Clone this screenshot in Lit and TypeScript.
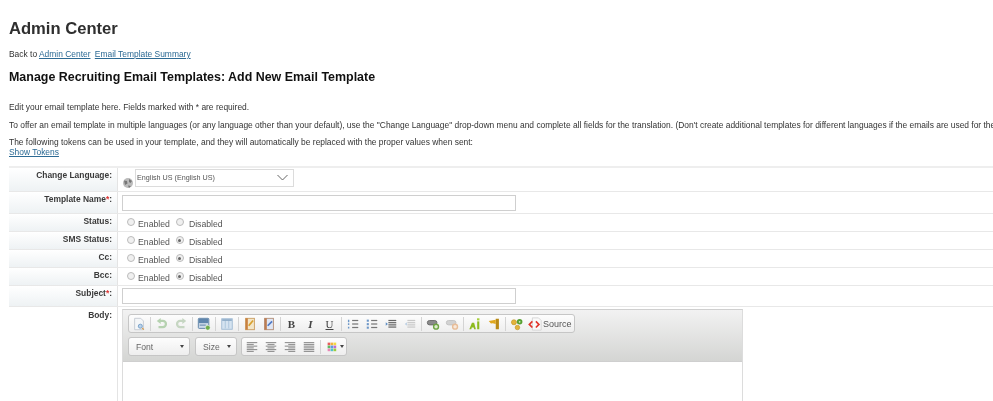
import { LitElement, html, css, svg } from "lit";
import { customElement } from "lit/decorators.js";

const L = (y: number, x1: number, x2: number, c: string, w = 1.4) =>
  svg`<line x1=${x1} y1=${y} x2=${x2} y2=${y} stroke=${c} stroke-width=${w} />`;
const lines = (c: string, xs = 3, xe = 13) => [4, 6.5, 9, 11.5].map((y) => L(y, xs, xe, c));

const icons: Record<string, unknown> = {
  preview: svg`<path d="M3 1.5h7l3 3v10H3z" fill="#f4f6f8" stroke="#c2c8d0"/><circle cx="9.5" cy="10.5" r="2.3" fill="#bcd3ea" stroke="#6f9bc6"/><path d="M11.5 12.5l2 2" stroke="#d89a4a" stroke-width="1.4"/>`,
  undo: svg`<path d="M5 4.5h4a3.5 3.5 0 0 1 0 7H4" fill="none" stroke="#b6d2b0" stroke-width="2.6"/><path d="M6.5 1v7L2 4.5z" fill="#b6d2b0"/>`,
  redo: svg`<g transform="matrix(-1 0 0 1 16 0)"><path d="M5 4.5h4a3.5 3.5 0 0 1 0 7H4" fill="none" stroke="#c6d6c2" stroke-width="2.6"/><path d="M6.5 1v7L2 4.5z" fill="#c6d6c2"/></g>`,
  image: svg`<rect x="1.5" y="1.5" width="12" height="11.5" rx="1" fill="#cfdcea" stroke="#557ba2"/><rect x="2" y="2" width="11" height="5" fill="#5f86ad"/><rect x="3" y="8.5" width="7" height="1.6" fill="#7f9dbb"/><circle cx="12.3" cy="12.3" r="2.8" fill="#6fae4c" stroke="#fff" stroke-width=".6"/>`,
  table: svg`<rect x="2" y="2" width="12" height="12" fill="#d5e3f0" stroke="#9db8d2"/><path d="M6 3v10M10 3v10" stroke="#a8c2da"/><path d="M2.5 3.5h11" stroke="#8fadc9" stroke-width="2"/>`,
  tpl1: svg`<rect x="3" y="1.5" width="10" height="13" fill="#f3e6c8" stroke="#c89a5c"/><rect x="3" y="1.5" width="2.5" height="13" fill="#c87f3f"/><path d="M6.5 10l5-6" stroke="#d9a02e" stroke-width="2"/>`,
  tpl2: svg`<rect x="3" y="1.5" width="10" height="13" fill="#dfe6f4" stroke="#b08a72"/><rect x="3" y="1.5" width="2.5" height="13" fill="#bd7c50"/><path d="M6.5 10l5-5" stroke="#4f78c4" stroke-width="2"/>`,
  numlist: svg`<g>${[4, 8, 12].map((y) => L(y, 7, 14, "#777"))}</g><path d="M3 3v3M3 7v2M3 11v2" stroke="#6d97c8" stroke-width="1.6"/>`,
  bullist: svg`<g>${[4, 8, 12].map((y) => L(y, 7, 14, "#777"))}</g><g fill="#6d97c8"><rect x="2" y="3" width="2.4" height="2.4"/><rect x="2" y="7" width="2.4" height="2.4"/><rect x="2" y="11" width="2.4" height="2.4"/></g>`,
  indent: svg`<g>${lines("#666", 5, 14)}</g><path d="M2 6l2.5 2L2 10z" fill="#5f8fc4"/>`,
  outdent: svg`<g>${lines("#c8c8c8", 5, 14)}</g><path d="M4.5 6L2 8l2.5 2z" fill="#bcd0e4"/>`,
  link: svg`<rect x="1.5" y="4" width="11" height="5" rx="2.5" fill="#8a8a8a" stroke="#666"/><circle cx="11.5" cy="11" r="2.8" fill="#dfeccf" stroke="#6ea544" stroke-width="1.6"/>`,
  unlink: svg`<rect x="1.5" y="4" width="11" height="5" rx="2.5" fill="#d2d2d2" stroke="#c0c0c0"/><circle cx="11.5" cy="11" r="2.8" fill="#f8e8da" stroke="#e8bd98" stroke-width="1.6"/>`,
  anchor: svg`<path d="M1.5 14l3-7.5H7L9 14H7L6.5 12h-2.2L3.8 14z" fill="#8dbb1f"/><rect x="10.5" y="5" width="2.4" height="9" fill="#8dbb1f"/><rect x="10.3" y="1.5" width="2.8" height="2.4" fill="#a7cf3a"/>`,
  flag: svg`<rect x="10" y="2" width="3.6" height="12" fill="#b98a16"/><path d="M2 4.5l8-1.5v5L6.5 7l-2 .5z" fill="#e0a81e"/>`,
  gear: svg`<g fill="#e3b33b" stroke="#b98a16" stroke-width=".6"><circle cx="4.5" cy="6" r="2.9"/><circle cx="8.5" cy="12" r="2.6"/></g><circle cx="11" cy="5.5" r="3.2" fill="#57a032"/><circle cx="11" cy="5.5" r="1" fill="#d9edc8"/>`,
  source: svg`<path d="M5 1h7l3 3v11H5z" fill="#fafafa" stroke="#d2d2d2"/><path d="M5 5L1.5 8.5 5 12M9 5l3.5 3.5L9 12" fill="none" stroke="#e2352b" stroke-width="1.9"/>`,
  left: svg`<g>${[3, 5, 7, 9, 11, 13].map((y, i) => L(y, 2, i % 2 ? 10 : 14, "#777", 1))}</g>`,
  center: svg`<g>${[3, 5, 7, 9, 11, 13].map((y, i) => L(y, i % 2 ? 4 : 2, i % 2 ? 12 : 14, "#777", 1))}</g>`,
  right: svg`<g>${[3, 5, 7, 9, 11, 13].map((y, i) => L(y, i % 2 ? 6 : 2, 14, "#777", 1))}</g>`,
  justify: svg`<g>${[3, 5, 7, 9, 11, 13].map((y) => L(y, 2, 14, "#777", 1))}</g>`,
  colors: svg`<g>${["#e85b5b", "#f2b33d", "#f4d93f", "#5dbb63", "#5a9be0", "#c06bd0", "#e887b5", "#4fc3c9", "#9ccc3c"].map((c, i) => svg`<rect x=${3 + (i % 3) * 3.4} y=${3 + Math.floor(i / 3) * 3.4} width="3" height="3" fill=${c} />`)}</g>`,
};

const row1: (string | null)[] = ["preview", null, "undo", "redo", null, "image", null, "table", null, "tpl1", "tpl2", null, "B", "I", "U", null, "numlist", "bullist", "indent", "outdent", null, "link", "unlink", null, "anchor", "flag", null, "gear"];

type Row = { label: string; req?: boolean; kind: string; h: string; sel?: boolean };
const rows: Row[] = [
  { label: "Change Language:", kind: "lang", h: "h24" },
  { label: "Template Name", req: true, kind: "input", h: "h22" },
  { label: "Status:", kind: "radio", h: "h18", sel: false },
  { label: "SMS Status:", kind: "radio", h: "h18", sel: true },
  { label: "Cc:", kind: "radio", h: "h18", sel: true },
  { label: "Bcc:", kind: "radio", h: "h18", sel: true },
  { label: "Subject", req: true, kind: "input", h: "h21" },
];

@customElement("app-root")
export class AppRoot extends LitElement {
  static styles = css`
    :host { display: block; width: 993px; height: 401px; overflow: hidden; background: #fff; font-family: "Liberation Sans", Arial, sans-serif; color: #333; font-size: 8.43px; filter: blur(0.3px); }
    h1 { margin: 0; padding: 20px 0 0 9px; font-size: 16.6px; line-height: 18px; font-weight: 700; color: #2f2f2f; }
    .crumb { padding: 11px 0 0 9px; line-height: 11px; }
    a { color: #2c6a94; text-decoration: underline; }
    .crumb a + a { margin-left: 2px; }
    h2 { margin: 0; padding: 10px 0 0 9px; font-size: 12.45px; line-height: 14px; font-weight: 700; color: #111; }
    .p { padding-left: 9px; line-height: 10px; white-space: nowrap; }
    .p1 { padding-top: 18px; }
    .p2 { padding-top: 8px; }
    .p3 { padding-top: 7px; }
    .form { margin: 9px 0 0 9px; border-top: 2px solid #eeeeee; }
    .row { display: flex; border-bottom: 1px solid #e8e8e8; box-sizing: border-box; }
    .h24 { height: 24px; } .h22 { height: 22px; } .h21 { height: 21px; } .h18 { height: 18px; }
    .lbl { width: 109px; flex: none; box-sizing: border-box; text-align: right; padding: 2px 5px 0 0; font-weight: 700; color: #3a3a3a; line-height: 10px; background: linear-gradient(#ffffff, #eef2f4); border-right: 1px solid #e4e4e4; }
    .lbl i { color: #d33; font-style: normal; }
    .val { flex: 1; display: flex; align-items: center; padding-left: 4px; }
    .globe { margin: 7px 1px 0 0; flex: none; }
    .sel { width: 159px; height: 18px; margin-top: -4px; box-sizing: border-box; border: 1px solid #dcdcdc; display: flex; align-items: center; justify-content: space-between; padding: 0 5px 0 1px; font-size: 7.2px; color: #555; }
    .txt { width: 394px; height: 16px; box-sizing: border-box; border: 1px solid #cfcfcf; background: #fff; }
    .radio { width: 6px; height: 6px; border-radius: 50%; border: 1px solid #bbb; background: #f0f0f0; flex: none; display: flex; align-items: center; justify-content: center; margin: -1px 0 0 5px; }
    .radio + .rl + .radio { margin-left: 1px; }
    .radio b { width: 3px; height: 3px; background: #666; border-radius: 50%; }
    .rl { margin: 2px 5px 0 3px; color: #555; font-size: 8.7px; }
    .radio + .rl + .radio + .rl { margin-left: 5px; }
    .body { display: flex; }
    .bl { height: 100px; background: #fff; padding-top: 3px; }
    .editor { margin: 2px 0 0 4px; width: 621px; height: 200px; box-sizing: border-box; border: 1px solid #dcdcdc; border-top-color: #cfcfcf; }
    .tb { height: 52px; box-sizing: border-box; border-bottom: 1px solid #cfcfcf; background: linear-gradient(#f2f2f2, #d4d5d3); padding: 4px 0 0 5px; }
    .tr { display: flex; gap: 4px; height: 19px; margin-bottom: 4px; }
    .grp { display: flex; align-items: center; box-sizing: border-box; height: 19px; border: 1px solid #c6c6c6; border-radius: 3px; background: linear-gradient(#fdfdfd, #eeeeee); }
    .btn { width: 19px; height: 16px; display: flex; align-items: center; justify-content: center; flex: none; font-family: "Liberation Serif", serif; font-size: 11px; color: #444; }
    .btn.i { font-style: italic; font-weight: 700; }
    .btn.u { text-decoration: underline; font-weight: 400; }
    .btn.b { font-weight: 700; }
    .sep { width: 1px; height: 14px; margin: 0 1.5px; background: #d4d4d4; flex: none; }
    .src { display: flex; align-items: center; font-size: 9px; color: #555; margin: 0 2px 0 2px; gap: 1px; }
    .combo { display: flex; align-items: center; justify-content: space-between; padding: 0 5px 0 7px; color: #666; font-size: 8.6px; }
    .arrow { width: 0; height: 0; border: 2px solid transparent; border-top: 3px solid #444; border-bottom: 0; }
    .font { width: 62px; margin-right: 1px; } .size { width: 42px; }
    .colorbtn { width: 24px; height: 16px; display: flex; align-items: center; justify-content: center; gap: 1px; }
  `;

  private ic(n: string) {
    return html`<svg width="14" height="14" viewBox="0 0 16 16">${icons[n]}</svg>`;
  }

  private field(r: Row) {
    if (r.kind === "lang")
      return html`<svg class="globe" width="12" height="12" viewBox="0 0 12 12"><circle cx="6" cy="6" r="5" fill="#bbb"/><path d="M2 3.5l3 .5 .5 2.5L3 8zM7 2l3 2-1.5 2L7 5zM6 8.5l3 .5-2 2z" fill="#777"/></svg>
        <div class="sel"><span>English US (English US)</span>
          <svg width="11" height="7" viewBox="0 0 11 7"><path d="M.5 1l5 5 5-5" fill="none" stroke="#666"/></svg></div>`;
    if (r.kind === "input") return html`<div class="txt"></div>`;
    return html`<span class="radio"></span><span class="rl">Enabled</span>
      <span class="radio">${r.sel ? html`<b></b>` : ""}</span><span class="rl">Disabled</span>`;
  }

  render() {
    return html`
      <h1>Admin Center</h1>
      <div class="crumb">Back to <a>Admin Center</a> <a>Email Template Summary</a></div>
      <h2>Manage Recruiting Email Templates: Add New Email Template</h2>
      <div class="p p1">Edit your email template here. Fields marked with * are required.</div>
      <div class="p p2">To offer an email template in multiple languages (or any language other than your default), use the "Change Language" drop-down menu and complete all fields for the translation. (Don't create additional templates for different languages if the emails are used for the same purpose.)</div>
      <div class="p p3">The following tokens can be used in your template, and they will automatically be replaced with the proper values when sent:</div>
      <div class="p"><a>Show Tokens</a></div>
      <div class="form">
        ${rows.map(
          (r) => html`<div class="row ${r.h}">
            <div class="lbl">${r.label}${r.req ? html`<i>*</i>:` : ""}</div>
            <div class="val">${this.field(r)}</div>
          </div>`
        )}
        <div class="body">
          <div class="lbl bl">Body:</div>
          <div class="editor">
            <div class="tb">
              <div class="tr">
                <div class="grp">
                  ${row1.map((n) =>
                    n === null
                      ? html`<span class="sep"></span>`
                      : n.length === 1
                      ? html`<span class="btn ${n.toLowerCase()}">${n}</span>`
                      : html`<span class="btn">${this.ic(n)}</span>`
                  )}
                  <span class="src">${this.ic("source")}<span>Source</span></span>
                </div>
              </div>
              <div class="tr">
                <div class="grp combo font"><span>Font</span><span class="arrow"></span></div>
                <div class="grp combo size"><span>Size</span><span class="arrow"></span></div>
                <div class="grp">
                  ${["left", "center", "right", "justify"].map((n) => html`<span class="btn">${this.ic(n)}</span>`)}
                  <span class="sep"></span>
                  <span class="colorbtn">${this.ic("colors")}<span class="arrow"></span></span>
                </div>
              </div>
            </div>
          </div>
        </div>
      </div>
    `;
  }
}
